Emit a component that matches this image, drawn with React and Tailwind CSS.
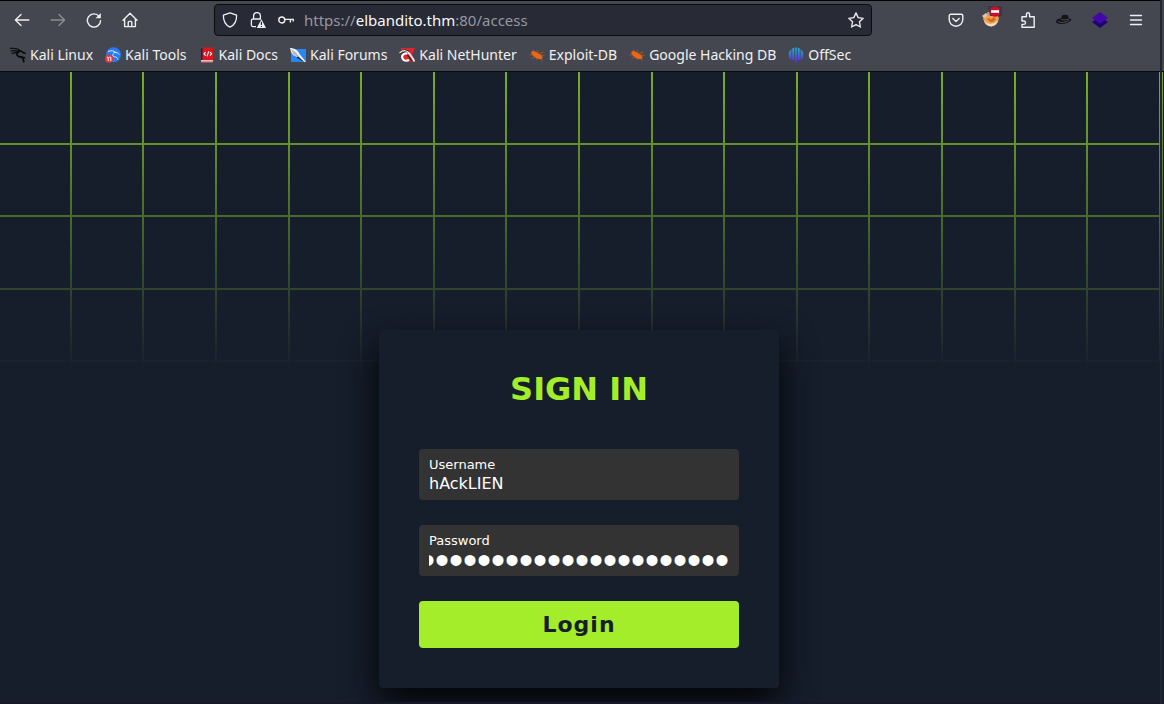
import React, { useEffect, useRef } from "react";

const LINES = Array.from({ length: 48 }, (_, i) => Math.floor(72.6 * (i + 1) - 2.35));
const ROWS = [71, 143, 216, 288];

function BackArrow({ flip, className }) {
  return (
    <svg viewBox="0 0 16 16" className={className} fill="none" stroke="currentColor" strokeWidth="1.4" strokeLinecap="round" strokeLinejoin="round">
      {flip ? <path d="M1.2 8H14.4M9 2.6 14.6 8 9 13.4" /> : <path d="M14.8 8H1.6M7 2.6 1.4 8 7 13.4" />}
    </svg>
  );
}

function Reload() {
  return (
    <svg viewBox="0 0 16 16" className="size-4" fill="none" stroke="currentColor" strokeWidth="1.4" strokeLinecap="round">
      <path d="M13.2 4.4A6.6 6.6 0 1 0 14.6 8.6" />
      <path d="M14.8 1v5.2H9.6z" fill="currentColor" stroke="none" />
    </svg>
  );
}

function Home() {
  return (
    <svg viewBox="0 0 16 16" className="size-4" fill="none" stroke="currentColor" strokeWidth="1.4" strokeLinejoin="round" strokeLinecap="round">
      <path d="M1 8.2 8 1.2l7 7M2.6 7v7.6h10.8V7M6.2 14.4v-4a1 1 0 0 1 1-1h1.6a1 1 0 0 1 1 1v4" />
    </svg>
  );
}

function Shield() {
  return (
    <svg viewBox="0 0 16 16" className="size-4" fill="none" stroke="currentColor" strokeWidth="1.3" strokeLinejoin="round">
      <path d="M8 .9 14.6 3.2c.2 5-1.8 9.6-6.6 12C3.2 12.8 1.2 8.2 1.4 3.2z" />
    </svg>
  );
}

function LockWarning() {
  return (
    <svg viewBox="0 0 16 16" className="size-4" fill="none" stroke="currentColor" strokeWidth="1.3">
      <path d="M3.600 7V4a3.400 3.400 0 0 1 6.800 0v3M6 14.600H3a1.600 1.600 0 0 1-1.600-1.600V8.600A1.600 1.600 0 0 1 3 7h8" />
      <path d="M11.400 7.200 16 16H6.800z" fill="currentColor" stroke="none" />
      <path d="M11.400 9.800v3.200M11.400 13.900v1.100" stroke="#282a36" strokeWidth="1.200" />
    </svg>
  );
}

function Key() {
  return (
    <svg viewBox="0 0 16 16" className="size-4" fill="none" stroke="currentColor" strokeWidth="1.400">
      <circle cx="3.800" cy="8" r="3" />
      <path d="M6.800 7.400h9.200M12.400 7.400v3.200M15.200 7.400v2.200" />
    </svg>
  );
}

function Star() {
  return (
    <svg viewBox="0 0 16 16" className="size-4" fill="none" stroke="currentColor" strokeWidth="1.300" strokeLinejoin="round">
      <path d="m8 .9 2.200 4.700 5 .7-3.700 3.500.9 5.200L8 12.600 3.600 15l.9-5.200L.8 6.300l5-.7z" />
    </svg>
  );
}

function Pocket() {
  return (
    <svg viewBox="0 0 16 16" className="size-4" fill="none" stroke="currentColor" strokeWidth="1.400" strokeLinecap="round" strokeLinejoin="round">
      <path d="M2.800 2.200h10.400a1.600 1.600 0 0 1 1.600 1.600v3.800a6.800 6.600 0 0 1-13.600 0V3.800a1.600 1.600 0 0 1 1.600-1.600z" />
      <path d="m4.800 6.600 3.200 3 3.200-3" />
    </svg>
  );
}

function FoxProxy() {
  return (
    <svg viewBox="0 0 20 22" className="h-[22px] w-5">
      <circle cx="9" cy="13" r="7.500" fill="#a9a29c" />
      <path d="M1 12.500c2-2 3-3 5-3l8-1 3 3.500-3 6.500-5 2-5-2z" fill="#f4a04b" />
      <path d="M2 14c1 4 4 6 7 6.200 4 .2 6-3 7.500-6.200l-4 3-4 1-4-1z" fill="#e8ded3" />
      <path d="m5 13 2-1 2 1.500L12 11l2 2-3 3H8z" fill="#cf6b20" />
      <path d="m0 10 4-3 1 3-3 2z" fill="#e7c7a7" />
      <path d="M6 0h14v10H8z" fill="#38383d" />
      <circle cx="13" cy="5.500" r="5.300" fill="#c8102e" />
      <path d="M9 4.200h8v2.600H9z" fill="#fff" />
    </svg>
  );
}

function Puzzle() {
  return (
    <svg viewBox="0 0 16 16" className="size-4" fill="none" stroke="currentColor" strokeWidth="1.400" strokeLinejoin="round">
      <path d="M2 7.400V4.800h4.400V2.400a1.600 1.600 0 0 1 3.200 0v2.400h4.600v10.400H2v-2.800h1.800a1.700 1.700 0 0 0 0-3.400H2z" />
    </svg>
  );
}

function Hat() {
  return (
    <svg viewBox="0 0 18 16" className="h-4 w-[18px]">
      <path d="M1 9c1.500-2.500 4-2.500 5-2.500L7 3.500c2-1.200 4-1 6-.2l.8 3.200c2 0 3 .8 2.400 1.800-1.800 2.500-6 4-10 3.800C3 12 .6 11 1 9z" fill="#151518" />
      <path d="M6.200 7c2 1.300 5 1.300 7.600 0M3 9.500c3 1.600 8 1.200 11-1" fill="none" stroke="#65666b" strokeWidth=".7" />
    </svg>
  );
}

function Layers() {
  return (
    <svg viewBox="0 0 16 16" className="size-4">
      <path d="m8 4.500 8 5.500-8 6-8-6z" fill="#1e0474" />
      <path d="m8 0 8 6-8 5.800L0 6z" fill="#4407ab" />
    </svg>
  );
}

function Menu() {
  return (
    <svg viewBox="0 0 16 16" className="size-4" fill="none" stroke="currentColor" strokeWidth="1.400" strokeLinecap="round">
      <path d="M2.500 3.500h11M2.500 8h11M2.500 12.500h11" />
    </svg>
  );
}

function Dragon() {
  return (
    <svg viewBox="0 0 16 16" className="size-4" fill="none" stroke="#08080a" strokeLinecap="round">
      <path d="M.6 1.400c4-.6 7 .2 9.400 2M1 4c3-.8 5.400-.5 8 .6M2 6.600c2-1 4-1.200 6-.8" strokeWidth="1.100" />
      <path d="M9 3.500c1.500 0 3 .8 4.600 2.300l1.400.4M9.500 4.500C6.500 5 6 8.500 8.500 9.300c3 .6 5 1.200 5.300 5.500" strokeWidth="1.700" />
      <path d="m10 9.600 4.500 1.200" strokeWidth="1.400" />
    </svg>
  );
}

function Tools() {
  return (
    <svg viewBox="0 0 16 16" className="size-4">
      <circle cx="8.500" cy="7.800" r="7.500" fill="#267bf4" />
      <path d="M3 4.500c4-1.500 6-.5 8 1M8.500 5.500c3-.5 5 .8 6 2M9 6.500c-2 1-1.500 3 .5 3.300s3 .7 3.500 3" fill="none" stroke="#dceafe" strokeWidth="1" />
      <circle cx="4" cy="11.800" r="4" fill="#ee3037" />
      <path d="M1.800 10.200h1.400v4M4.400 10.200h1.400v4" fill="none" stroke="#fff" strokeWidth="1" />
    </svg>
  );
}

function Docs() {
  return (
    <svg viewBox="0 0 16 16" className="size-4">
      <path d="M2 1h2v13H2z" fill="#172253" />
      <path d="M3.500.500H14V13H3.500z" fill="#dc151c" />
      <path d="M2 13h12v2.500H2z" fill="#e0c7ca" />
      <path d="M2 14.700h12v.800H2z" fill="#b51a24" />
      <path d="M6.600 5 5 6.800l1.600 1.800M11 5l1.600 1.800L11 8.600M9.800 4.400 8 9.200" fill="none" stroke="#fff" strokeWidth="1.100" />
    </svg>
  );
}

function Forums() {
  return (
    <svg viewBox="0 0 16 16" className="size-4">
      <path d="M1 2h15v13H1z" fill="#2588f6" />
      <path d="M0 1c4 0 8 2 9.500 6L16 15h-3L7 10 3 8 1 5z" fill="#f2f4f6" />
      <path d="m1 2 5 3.500 5 6.500-5-3-3-2z" fill="#aeb8c4" />
      <path d="M8 9.500 14.500 15l-2-.5-6-4z" fill="#1a2634" />
    </svg>
  );
}

function NetHunter() {
  return (
    <svg viewBox="0 0 16 16" className="size-4">
      <path d="M2 1h14l-3 7 2.500 6L9 15 2 10z" fill="#e0232e" />
      <path d="M0 5.500C3 2 8 1.500 10.500 5L7 6 2 8z" fill="#3a3438" />
      <path d="M.5 6C4 2.800 8 3 10 6" fill="none" stroke="#e8e8e8" strokeWidth="1.100" />
      <path d="M8.500 6.500C5 5.500 2 8.500 3.500 11.500c1.400 2.800 5 2.800 6.300 1" fill="none" stroke="#fff" strokeWidth="2.200" />
      <path d="M9 5.500c2.500 2 4 4.500 6.500 9" fill="none" stroke="#f4eeee" strokeWidth="1.800" />
      <path d="m8.500 8 4.500 6" stroke="#252020" strokeWidth="1.200" />
    </svg>
  );
}

function Bug() {
  return (
    <svg viewBox="0 0 16 16" className="size-4">
      <path d="M2.500 4.500c1.500-1 3.500-.5 5 .7l4 2.300c2.300 1.600 2.500 4 1 4.600-2.500.4-5-.5-7-2.100C3 8.500 1.700 6 2.500 4.500z" fill="#ee6515" />
      <path d="M.5 8 4 7.500M2.500 11.500l4-2M7 13l1.500-2M4 2.500l1.500 3M8 3l1 3.500M10.500 6l4-.8M12 8l3.500.3M12 11l1.500 3" stroke="#c95a1b" strokeWidth=".7" />
    </svg>
  );
}

function OffSec() {
  return (
    <svg viewBox="0 0 16 16" className="size-4">
      <defs>
        <linearGradient id="offsec" x1="0" y1="0" x2="0" y2="16" gradientUnits="userSpaceOnUse">
          <stop offset="0" stopColor="#16b5cc" />
          <stop offset="1" stopColor="#6524df" />
        </linearGradient>
      </defs>
      <path d="M3.400 2v11.400a7.400 7.400 0 0 1 0-11.400zM4.200 1.500 6.300.6v13.200l-2.100-.9zM7.200.4h1.600V16H7.200zM9.700.6l2.100.9v11.400l-2.100.9zM12.600 2a7.400 7.400 0 0 1 0 11.400z" fill="url(#offsec)" />
    </svg>
  );
}

const BOOKMARKS = [
  ["Kali Linux", Dragon],
  ["Kali Tools", Tools],
  ["Kali Docs", Docs],
  ["Kali Forums", Forums],
  ["Kali NetHunter", NetHunter],
  ["Exploit-DB", Bug],
  ["Google Hacking DB", Bug],
  ["OffSec", OffSec],
];

function IconButton({ label, children, className = "" }) {
  return (
    <button type="button" aria-label={label} className={`flex h-8 shrink-0 items-center justify-center ${className}`}>
      {children}
    </button>
  );
}

function BrowserChrome() {
  return (
    <header className="border-b border-[#0c0c0d] bg-[#44474f] font-['Noto_Sans',sans-serif] text-[#f0f0f2]">
      <div className="flex h-[39px] items-center border-t border-black pr-[6px]">
        <nav aria-label="Navigation" className="flex w-[214px] shrink-0 pl-1">
          <IconButton label="Back" className="w-9"><BackArrow className="size-4" /></IconButton>
          <IconButton label="Forward" className="w-9 text-[#8b8d92]"><BackArrow flip className="size-4" /></IconButton>
          <IconButton label="Reload" className="w-9"><Reload /></IconButton>
          <IconButton label="Home" className="w-9"><Home /></IconButton>
        </nav>
        <div className="flex h-8 min-w-0 grow items-center rounded border border-[#0c0c0d] bg-[#282a36] px-[7px]">
          <div className="flex shrink-0 gap-3">
            <Shield />
            <LockWarning />
            <Key />
          </div>
          <p className="ml-[10px] grow truncate text-[15px] leading-6 text-[#97989f]">
            https://<span className="text-[#f9f9fa]">elbandito.thm</span>:80/access
          </p>
          <button type="button" aria-label="Bookmark this page"><Star /></button>
        </div>
        <div className="ml-[66px] flex shrink-0">
          <IconButton label="Pocket" className="w-9"><Pocket /></IconButton>
          <IconButton label="FoxProxy" className="w-9 pb-[6px]"><FoxProxy /></IconButton>
          <IconButton label="Extensions" className="w-9"><Puzzle /></IconButton>
          <IconButton label="Hat" className="w-9"><Hat /></IconButton>
          <IconButton label="Layers" className="w-9"><Layers /></IconButton>
          <IconButton label="Menu" className="w-9"><Menu /></IconButton>
        </div>
      </div>
      <nav aria-label="Bookmarks" className="flex h-8 items-center gap-3 pl-[10px]">
        {BOOKMARKS.map(([name, Icon]) => (
          <a key={name} href="#" className="flex shrink-0 items-center gap-1 text-sm leading-5">
            <Icon />
            {name}
          </a>
        ))}
      </nav>
    </header>
  );
}

function GridBackdrop() {
  return (
    <svg aria-hidden="true" className="absolute inset-x-0 top-0 h-[300px] w-full">
      <defs>
        <linearGradient id="fade" x1="0" y1="0" x2="0" y2="300" gradientUnits="userSpaceOnUse">
          <stop offset="0" stopColor="#7aad28" />
          <stop offset="0.240" stopColor="#62902b" />
          <stop offset="0.480" stopColor="#496a2b" />
          <stop offset="0.720" stopColor="#2f452b" />
          <stop offset="0.960" stopColor="#1a232c" />
          <stop offset="1" stopColor="#161d2b" />
        </linearGradient>
      </defs>
      {ROWS.map((y) => <rect key={y} x="0" y={y} width="100%" height="2" fill="url(#fade)" />)}
      {LINES.map((x) => <rect key={x} x={x} y="0" width="2" height="300" fill="url(#fade)" />)}
    </svg>
  );
}

function Field({ id, label, className = "text-base", ...input }) {
  const ref = useRef(null);
  useEffect(() => {
    ref.current.scrollLeft = ref.current.scrollWidth;
  }, []);
  return (
    <div className="rounded bg-[#333333] px-[10px] pt-2 pb-[6px] text-white">
      <label htmlFor={id} className="block text-[13px] leading-4">{label}</label>
      <input ref={ref} id={id} className={`mt-px block h-5 w-full bg-transparent leading-5 outline-none ${className}`} {...input} />
    </div>
  );
}

export default function App() {
  return (
    <div className="flex min-h-screen bg-[#161d2b]">
      <div className="flex min-w-0 grow flex-col">
        <BrowserChrome />
        <main className="relative flex grow flex-col items-center overflow-hidden border-b-2 border-[#17172a] pt-[258px] pr-[2px] pb-[14px] font-['DejaVu_Sans',sans-serif]">
          <GridBackdrop />
          <form
            onSubmit={(e) => e.preventDefault()}
            className="relative flex w-full max-w-[400px] flex-col gap-[25px] rounded bg-[#161d2b] p-10 shadow-[0_15px_35px_#000000e6]"
          >
            <h1 className="mb-4 text-center text-[32px] leading-[38px] font-bold text-[#a3ed2b]">SIGN IN</h1>
            <Field id="username" label="Username" type="text" defaultValue="hAckLIEN" />
            <Field
              id="password"
              label="Password"
              type="password"
              defaultValue="aaaaaaaaaaaaaaaaaaaaaa"
              className="font-['Liberation_Sans',sans-serif] text-[40px]"
            />
            <button type="submit" className="h-[47px] rounded bg-[#a3ed2b] text-[22px] leading-7 font-bold tracking-[1px] text-[#161d2b]">
              Login
            </button>
          </form>
        </main>
      </div>
      <div className="flex w-1 shrink-0 flex-col border-l-2 border-[#242530]">
        <div className="h-[72px] border-b border-[#0c0c0d] bg-[#44474f]" />
        <div className="h-[300px] w-px bg-linear-to-b from-[#7aad28] to-[#161d2b]" />
      </div>
    </div>
  );
}
